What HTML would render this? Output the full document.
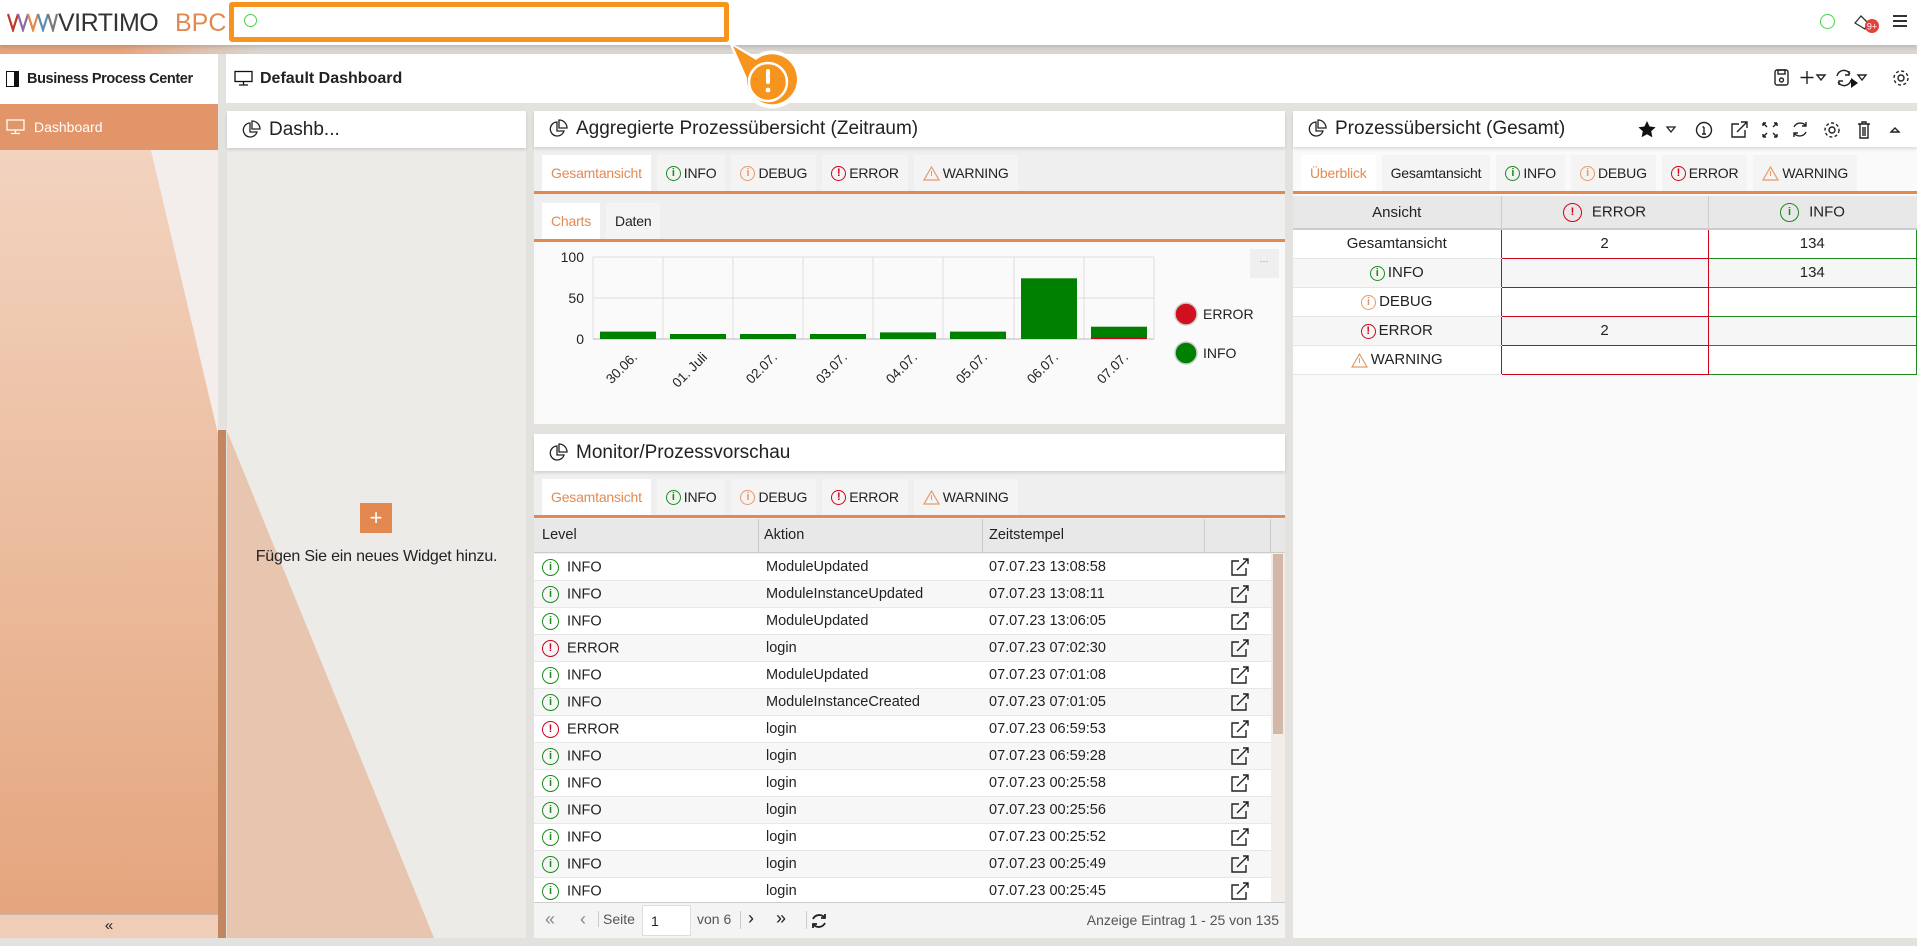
<!DOCTYPE html>
<html><head><meta charset="utf-8">
<style>
*{box-sizing:border-box;margin:0;padding:0}
body{width:1917px;height:946px;overflow:hidden;background:#e4e2df;font-family:"Liberation Sans",sans-serif;color:#222;position:relative}
.abs{position:absolute}
.top{left:0;top:0;width:1917px;height:45px;background:#fff;box-shadow:0 2px 4px rgba(0,0,0,.15);z-index:5}
.strip{left:0;top:45px;width:1917px;height:9px;background:linear-gradient(90deg,#e7a47c 0,#e7a47c 120px,#d9d6d2 260px,#d9d6d2 100%)}
.white{background:#fff}
.hdr{display:flex;align-items:center;font-size:19px;padding-left:14px;box-shadow:0 2px 3px rgba(0,0,0,.12);white-space:nowrap}
.tabs{display:flex;gap:6px;padding-left:8px;border-bottom:3px solid #e3894f;align-items:flex-end}
.tab{background:#f4f4f4;height:36px;display:flex;align-items:center;padding:0 9px;font-size:14px;gap:3px;letter-spacing:-.2px;white-space:nowrap}
.tab.act{background:#fff;color:#e38a55}
.ic{display:inline-flex;width:15px;height:15px;border-radius:50%;border:1.4px solid;align-items:center;justify-content:center;font-size:11px;font-weight:bold;line-height:1;vertical-align:middle}
.g{color:#1d8a1d;border-color:#1d8a1d}
.o{color:#e59a6a;border-color:#e59a6a}
.r{color:#d0021b;border-color:#d0021b}
.row{position:absolute;left:0;width:737px;height:27px;border-bottom:1px solid #e8e8e8;font-size:14.5px}
.row>span{position:absolute;top:5px}
.ct td{border:1.5px solid;height:29px;text-align:center;font-size:15px;vertical-align:middle}
.ct td .ic,.ct td svg{margin-right:3px;vertical-align:middle}
</style></head><body>

<div class="abs strip"></div>
<div class="abs top">
  <svg class="abs" style="left:6px;top:12px" width="52" height="20" viewBox="0 0 52 20">
    <g stroke-width="2.2" fill="none">
      <path d="M2 2 L7 18 L12 2" stroke="#c0392b"/><path d="M12 2 L17 18 L22 2" stroke="#8e6aa0"/>
      <path d="M22 2 L27 18 L32 2" stroke="#e28a4a"/><path d="M32 2 L37 18 L42 2" stroke="#5b8fb0"/><path d="M42 2 L47 18 L51 2" stroke="#7a7a7a"/>
    </g>
  </svg>
  <div class="abs" style="left:58px;top:9px;font-size:25px;color:#333;letter-spacing:-.5px">VIRTIMO</div>
  <div class="abs" style="left:175px;top:9px;font-size:25px;color:#e3894f">BPC</div>
  <div class="abs" style="left:229px;top:2px;width:500px;height:40px;border:5px solid #f7941d;border-radius:3px;background:#fff"></div>
  <div class="abs" style="left:244px;top:14px;width:13px;height:13px;border:1.5px solid #4cd04c;border-radius:50%"></div>
  <div class="abs" style="left:1820px;top:14px;width:15px;height:15px;border:1.5px solid #4cd04c;border-radius:50%"></div>
  <svg class="abs" style="left:1852px;top:13px" width="30" height="22" viewBox="0 0 30 22"><path d="M3 10 L9 3 L15 9 L13 16 Z" fill="none" stroke="#333" stroke-width="1.3"/><circle cx="20" cy="13" r="7" fill="#e8403a"/><text x="20" y="16.5" font-size="9" fill="#fff" text-anchor="middle" font-family="Liberation Sans">9+</text></svg>
  <div class="abs" style="left:1893px;top:15px;width:14px;height:2px;background:#333;box-shadow:0 5px 0 #333,0 10px 0 #333"></div>
</div>

<svg class="abs" style="left:725px;top:38px;z-index:6" width="80" height="72" viewBox="0 0 80 72">
  <path d="M4 4 L30 18 A29 29 0 1 1 18 40 Z" fill="#fff"/>
  <path d="M8 8 L31 22 A25 25 0 1 1 22 40 Z" fill="#f7941d"/>
  <circle cx="43" cy="44" r="19" fill="none" stroke="#fff" stroke-width="2.5"/>
  <rect x="41" y="31" width="4" height="15" rx="2" fill="#fff"/><circle cx="43" cy="52" r="2.4" fill="#fff"/>
</svg>

<div class="abs" style="left:0;top:104px;width:218px;height:834px;background:#f3eeeb;overflow:hidden">
  <div class="abs" style="left:0;top:0;width:218px;height:834px;background:linear-gradient(#f3d6c3,#e4a47c);clip-path:polygon(0 0,140px 0,218px 330px,218px 834px,0 834px)"></div>
  <div class="abs" style="left:0;top:810px;width:218px;height:24px;background:rgba(255,255,255,.45);border-top:1px solid #c9b3a5;text-align:center;font-size:15px;line-height:22px">«</div>
</div>
<div class="abs white" style="left:0;top:54px;width:218px;height:50px;display:flex;align-items:center;padding-left:6px;font-weight:bold;font-size:14.5px;letter-spacing:-.4px;white-space:nowrap">
  <span style="display:inline-block;width:13px;height:16px;border:1.5px solid #111;border-right:5px solid #111;margin-right:8px"></span>Business Process Center</div>
<div class="abs" style="left:0;top:104px;width:218px;height:46px;background:#e3956a;color:#fff;font-size:14px;display:flex;align-items:center;padding-left:6px">
  <svg width="20" height="16" viewBox="0 0 20 16" style="margin-right:8px"><rect x="1" y="1" width="17" height="10" fill="none" stroke="#fff" stroke-width="1.3"/><path d="M9.5 11v3M5 14.5h9" stroke="#fff" stroke-width="1.3"/></svg>Dashboard</div>
<div class="abs" style="left:218px;top:430px;width:8px;height:508px;background:#c08760"></div>

<div class="abs white" style="left:226px;top:54px;width:1691px;height:49px;display:flex;align-items:center;padding-left:8px;font-weight:bold;font-size:16px">
  <svg width="20" height="17" viewBox="0 0 20 16" style="margin-right:6px"><rect x="1" y="1" width="17" height="10" fill="none" stroke="#111" stroke-width="1.3"/><path d="M9.5 11v3M5 14.5h9" stroke="#111" stroke-width="1.3"/></svg>Default Dashboard</div>
<svg class="abs" style="left:1770px;top:66px" width="140" height="24" viewBox="0 0 140 24">
  <g fill="none" stroke="#222" stroke-width="1.4">
    <rect x="5" y="4" width="13" height="15" rx="2"/><rect x="8" y="4" width="7" height="4"/><circle cx="11.5" cy="14" r="2"/>
    <path d="M37 5v13M30.5 11.5h13"/><path d="M47 9h8l-4 5z"/>
    <path d="M80 8a7 7 0 0 0-13 2M68 16a7 7 0 0 0 13-2"/><path d="M79 5v4h-4M69 19v-4h4"/><path d="M88 9h8l-4 5z"/>
  </g>
  <path d="M81 12v10l7-5z" fill="#111"/>
  <g transform="translate(131,12)" fill="none" stroke="#222" stroke-width="1.4"><circle r="3"/><circle r="7" stroke-dasharray="3 2.5"/></g>
</svg>

<div class="abs" style="left:227px;top:111px;width:299px;height:827px;background:#edebe8;overflow:hidden">
  <div class="abs" style="left:0;top:0;width:299px;height:827px;background:rgba(225,150,105,.45);clip-path:polygon(0 320px,0 827px,207px 827px)"></div>
  <div class="abs" style="left:133px;top:392px;width:32px;height:30px;background:#e3894f;color:#fff;text-align:center;font-size:22px;line-height:29px">+</div>
  <div class="abs" style="left:0;top:437px;width:299px;text-align:center;font-size:16px;letter-spacing:-.2px">Fügen Sie ein neues Widget hinzu.</div>
</div>
<div class="abs white hdr" style="left:227px;top:111px;width:299px;height:37px;font-size:19px">
  <svg width="20" height="20" viewBox="0 0 20 20" style="margin-right:8px"><g fill="none" stroke="#222" stroke-width="1.3"><path d="M9 3a7 7 0 1 0 7 9H9z"/><path d="M11 1v8h8a8 8 0 0 0-8-8z"/></g></svg>Dashb...</div>

<div class="abs" style="left:534px;top:111px;width:751px;height:313px;background:#efefef"></div>
<div class="abs white hdr" style="left:534px;top:111px;width:751px;height:36px">
  <svg width="20" height="20" viewBox="0 0 20 20" style="margin-right:8px"><g fill="none" stroke="#222" stroke-width="1.3"><path d="M9 3a7 7 0 1 0 7 9H9z"/><path d="M11 1v8h8a8 8 0 0 0-8-8z"/></g></svg>Aggregierte Prozessübersicht (Zeitraum)</div>
<div class="abs tabs" style="left:534px;top:154px;width:751px;height:40px">
  <div class="tab act">Gesamtansicht</div>
  <div class="tab"><span class="ic g">i</span>INFO</div>
  <div class="tab"><span class="ic o">i</span>DEBUG</div>
  <div class="tab"><span class="ic r">!</span>ERROR</div>
  <div class="tab"><svg width="17" height="15" viewBox="0 0 17 15"><path d="M8.5 1L16 14H1z" fill="none" stroke="#e59a6a" stroke-width="1.2"/><path d="M8.5 5v5" stroke="#e59a6a"/></svg>WARNING</div>
</div>
<div class="abs tabs" style="left:534px;top:202px;width:751px;height:40px">
  <div class="tab act">Charts</div>
  <div class="tab">Daten</div>
</div>
<svg class="abs" style="left:534px;top:242px" width="751" height="182" viewBox="0 0 751 182">
  <rect width="751" height="182" fill="#fafafa"/>
  <rect x="716" y="7" width="29" height="29" fill="#efefef"/><text x="730" y="22" font-size="9" fill="#888" text-anchor="middle">···</text>
  <g stroke="#ddd" stroke-width="1">
    <path d="M59 15h561M59 56h561"/>
    <path d="M59 15v82M129 15v82M199 15v82M269 15v82M339 15v82M409 15v82M480 15v82M550 15v82M620 15v82"/>
  </g>
  <path d="M59 97h561" stroke="#bbb"/>
  <g font-family="Liberation Sans" font-size="14" fill="#222" text-anchor="end">
    <text x="50" y="20">100</text><text x="50" y="61">50</text><text x="50" y="102">0</text>
  </g>
  <g fill="#008000">
    <rect x="66" y="89.6" width="56" height="7.4"/><rect x="136" y="92" width="56" height="5"/>
    <rect x="206" y="92" width="56" height="5"/><rect x="276" y="92" width="56" height="5"/>
    <rect x="346" y="90.4" width="56" height="6.6"/><rect x="416" y="89.6" width="56" height="7.4"/>
    <rect x="487" y="36.3" width="56" height="60.7"/><rect x="557" y="84.7" width="56" height="12.3"/>
  </g>
  <rect x="557" y="95.5" width="56" height="1.5" fill="#d0021b"/>
  <g font-family="Liberation Sans" font-size="13.5" fill="#222" text-anchor="end">
    <text transform="translate(104,116) rotate(-45)">30.06.</text>
    <text transform="translate(174,116) rotate(-45)">01. Juli</text>
    <text transform="translate(244,116) rotate(-45)">02.07.</text>
    <text transform="translate(314,116) rotate(-45)">03.07.</text>
    <text transform="translate(384,116) rotate(-45)">04.07.</text>
    <text transform="translate(454,116) rotate(-45)">05.07.</text>
    <text transform="translate(525,116) rotate(-45)">06.07.</text>
    <text transform="translate(595,116) rotate(-45)">07.07.</text>
  </g>
  <circle cx="652" cy="72" r="11" fill="#d0101e" stroke="#ccc" stroke-width="1.5"/>
  <circle cx="652" cy="111" r="11" fill="#008000" stroke="#ccc" stroke-width="1.5"/>
  <g font-family="Liberation Sans" font-size="14" fill="#222"><text x="669" y="77">ERROR</text><text x="669" y="116">INFO</text></g>
</svg>

<div class="abs" style="left:534px;top:434px;width:751px;height:504px;background:#efefef"></div>
<div class="abs white hdr" style="left:534px;top:434px;width:751px;height:37px">
  <svg width="20" height="20" viewBox="0 0 20 20" style="margin-right:8px"><g fill="none" stroke="#222" stroke-width="1.3"><path d="M9 3a7 7 0 1 0 7 9H9z"/><path d="M11 1v8h8a8 8 0 0 0-8-8z"/></g></svg>Monitor/Prozessvorschau</div>
<div class="abs tabs" style="left:534px;top:478px;width:751px;height:40px">
  <div class="tab act">Gesamtansicht</div>
  <div class="tab"><span class="ic g">i</span>INFO</div>
  <div class="tab"><span class="ic o">i</span>DEBUG</div>
  <div class="tab"><span class="ic r">!</span>ERROR</div>
  <div class="tab"><svg width="17" height="15" viewBox="0 0 17 15"><path d="M8.5 1L16 14H1z" fill="none" stroke="#e59a6a" stroke-width="1.2"/><path d="M8.5 5v5" stroke="#e59a6a"/></svg>WARNING</div>
</div>
<div class="abs" style="left:534px;top:519px;width:751px;height:34px;background:#e8e8e8;border-bottom:1px solid #ccc;font-size:14.5px">
  <span class="abs" style="left:8px;top:8px">Level</span>
  <span class="abs" style="left:224px;top:0;height:34px;border-left:1px solid #ccc"></span>
  <span class="abs" style="left:230px;top:8px">Aktion</span>
  <span class="abs" style="left:448px;top:0;height:34px;border-left:1px solid #ccc"></span>
  <span class="abs" style="left:455px;top:8px">Zeitstempel</span>
  <span class="abs" style="left:670px;top:0;height:34px;border-left:1px solid #ccc"></span>
  <span class="abs" style="left:736px;top:0;height:34px;border-left:1px solid #ccc"></span>
</div>
<div class="abs" style="left:534px;top:554px;width:751px;height:348px;background:#fff;overflow:hidden">
  <div class="abs" style="left:737px;top:0;width:14px;height:348px;background:#f3ede9"></div>
  <div class="abs" style="left:739px;top:0;width:10px;height:180px;background:#d3b8a7"></div>
</div>
<div class="abs" style="left:534px;top:902px;width:751px;height:36px;background:#f4f4f4;border-top:1px solid #ccc;font-size:14px;color:#555">
  <span class="abs" style="left:11px;top:6px;font-size:18px;color:#888">«</span>
  <span class="abs" style="left:46px;top:6px;font-size:18px;color:#888">‹</span>
  <span class="abs" style="left:64px;top:8px;border-left:1px solid #ccc;padding-left:4px">Seite</span>
  <span class="abs" style="left:108px;top:2px;width:49px;height:31px;background:#fff;border:1px solid #ddd;padding:7px 8px;color:#222">1</span>
  <span class="abs" style="left:163px;top:8px">von 6</span>
  <span class="abs" style="left:206px;top:8px;height:18px;border-left:1px solid #ccc"></span>
  <span class="abs" style="left:214px;top:5px;font-size:18px;color:#222">›</span>
  <span class="abs" style="left:242px;top:5px;font-size:18px;color:#222">»</span>
  <span class="abs" style="left:272px;top:8px;height:18px;border-left:1px solid #ccc"></span>
  <svg class="abs" style="left:275px;top:8px" width="20" height="20" viewBox="0 0 20 20"><g fill="none" stroke="#222" stroke-width="1.8"><path d="M16 7a7 7 0 0 0-12 1M4 13a7 7 0 0 0 12-1"/><path d="M16 3v4h-4M4 17v-4h4"/></g></svg>
  <span class="abs" style="right:6px;top:9px">Anzeige Eintrag 1 - 25 von 135</span>
</div>

<div class="abs" style="left:1293px;top:111px;width:624px;height:827px;background:#fafafa"></div>
<div class="abs white hdr" style="left:1293px;top:111px;width:624px;height:36px">
  <svg width="20" height="20" viewBox="0 0 20 20" style="margin-right:8px"><g fill="none" stroke="#222" stroke-width="1.3"><path d="M9 3a7 7 0 1 0 7 9H9z"/><path d="M11 1v8h8a8 8 0 0 0-8-8z"/></g></svg>Prozessübersicht (Gesamt)</div>
<svg class="abs" style="left:1636px;top:118px" width="275" height="24" viewBox="0 0 275 24">
  <path d="M11 3l2.6 5.5 6 .7-4.4 4.1 1.2 6-5.4-3-5.4 3 1.2-6-4.4-4.1 6-.7z" fill="#111"/>
  <path d="M31 9h8l-4 5z" fill="none" stroke="#222" stroke-width="1.3"/>
  <g fill="none" stroke="#222" stroke-width="1.4">
    <circle cx="68" cy="12" r="7.5"/><path d="M68 9v7M66 16h4M66.5 9h1.5"/>
    <path d="M103 6h-7v13h13v-7M101 14l10-10M105 4h6v6"/>
    <path d="M127 5l4 4M127 5h3M127 5v3M141 5l-4 4M141 5h-3M141 5v3M127 19l4-4M127 19h3M127 19v-3M141 19l-4-4M141 19h-3M141 19v-3"/>
    <path d="M170 8a7 7 0 0 0-12 1M158 15a7 7 0 0 0 12-1M170 4v4h-4M158 19v-4h4"/>
    <circle cx="196" cy="12" r="3"/><circle cx="196" cy="12" r="7" stroke-dasharray="3 2.3"/>
    <path d="M222 6h12M226 6V4h4v2M224 6v14h8V6M227 9v9M229 9v9"/>
    <path d="M255 14l4-4 4 4z"/>
  </g>
</svg>
<div class="abs tabs" style="left:1293px;top:154px;width:624px;height:40px">
  <div class="tab act">Überblick</div>
  <div class="tab">Gesamtansicht</div>
  <div class="tab"><span class="ic g">i</span>INFO</div>
  <div class="tab"><span class="ic o">i</span>DEBUG</div>
  <div class="tab"><span class="ic r">!</span>ERROR</div>
  <div class="tab"><svg width="17" height="15" viewBox="0 0 17 15"><path d="M8.5 1L16 14H1z" fill="none" stroke="#e59a6a" stroke-width="1.2"/><path d="M8.5 5v5" stroke="#e59a6a"/></svg>WARNING</div>
</div>
<table class="abs ct" style="left:1293px;top:196px;width:624px;border-collapse:collapse;font-size:15px">
  <tr style="background:#e8e8e8;height:33px"><th style="width:208px;font-weight:normal;border-right:1px solid #ccc;border-bottom:2px solid #ccc;vertical-align:middle">Ansicht</th><th style="width:207px;font-weight:normal;border-right:1px solid #ccc;border-bottom:2px solid #ccc;vertical-align:middle"><span class="ic r" style="width:19px;height:19px;margin-right:10px">!</span>ERROR</th><th style="font-weight:normal;border-bottom:2px solid #ccc;vertical-align:middle"><span class="ic g" style="width:19px;height:19px;margin-right:10px">i</span>INFO</th></tr>
  <tr style="background:#fff"><td style="border:none;border-bottom:1px solid #e5e5e5">Gesamtansicht</td><td style="border-color:#d0021b">2</td><td style="border-color:#1d8a1d">134</td></tr>
  <tr style="background:#f6f6f6"><td style="border:none;border-bottom:1px solid #e5e5e5"><span class="ic g">i</span>INFO</td><td style="border-color:#d0021b"></td><td style="border-color:#1d8a1d">134</td></tr>
  <tr style="background:#fff"><td style="border:none;border-bottom:1px solid #e5e5e5"><span class="ic o">i</span>DEBUG</td><td style="border-color:#d0021b"></td><td style="border-color:#1d8a1d"></td></tr>
  <tr style="background:#f6f6f6"><td style="border:none;border-bottom:1px solid #e5e5e5"><span class="ic r">!</span>ERROR</td><td style="border-color:#d0021b">2</td><td style="border-color:#1d8a1d"></td></tr>
  <tr style="background:#fff"><td style="border:none;border-bottom:1px solid #e5e5e5"><svg width="17" height="15" viewBox="0 0 17 15"><path d="M8.5 1L16 14H1z" fill="none" stroke="#e59a6a" stroke-width="1.2"/><path d="M8.5 5v5" stroke="#e59a6a"/></svg>WARNING</td><td style="border-color:#d0021b"></td><td style="border-color:#1d8a1d"></td></tr>
</table>

<div class="abs" style="left:534px;top:554px;width:737px;height:348px;overflow:hidden">
<div class="row" style="top:0;background:#fff"><span style="left:8px"><span class="ic g" style="width:17px;height:17px">i</span>&nbsp; INFO</span><span style="left:232px">ModuleUpdated</span><span style="left:455px">07.07.23 13:08:58</span><span style="left:695px;top:2px"><svg width="22" height="22" viewBox="0 0 22 22"><path d="M10 5H3v14h14v-7M8 14L19 3M14 3h5v5" fill="none" stroke="#222" stroke-width="1.4"/></svg></span></div>
<div class="row" style="top:27px;background:#f7f7f7"><span style="left:8px"><span class="ic g" style="width:17px;height:17px">i</span>&nbsp; INFO</span><span style="left:232px">ModuleInstanceUpdated</span><span style="left:455px">07.07.23 13:08:11</span><span style="left:695px;top:2px"><svg width="22" height="22" viewBox="0 0 22 22"><path d="M10 5H3v14h14v-7M8 14L19 3M14 3h5v5" fill="none" stroke="#222" stroke-width="1.4"/></svg></span></div>
<div class="row" style="top:54px;background:#fff"><span style="left:8px"><span class="ic g" style="width:17px;height:17px">i</span>&nbsp; INFO</span><span style="left:232px">ModuleUpdated</span><span style="left:455px">07.07.23 13:06:05</span><span style="left:695px;top:2px"><svg width="22" height="22" viewBox="0 0 22 22"><path d="M10 5H3v14h14v-7M8 14L19 3M14 3h5v5" fill="none" stroke="#222" stroke-width="1.4"/></svg></span></div>
<div class="row" style="top:81px;background:#f7f7f7"><span style="left:8px"><span class="ic r" style="width:17px;height:17px">!</span>&nbsp; ERROR</span><span style="left:232px">login</span><span style="left:455px">07.07.23 07:02:30</span><span style="left:695px;top:2px"><svg width="22" height="22" viewBox="0 0 22 22"><path d="M10 5H3v14h14v-7M8 14L19 3M14 3h5v5" fill="none" stroke="#222" stroke-width="1.4"/></svg></span></div>
<div class="row" style="top:108px;background:#fff"><span style="left:8px"><span class="ic g" style="width:17px;height:17px">i</span>&nbsp; INFO</span><span style="left:232px">ModuleUpdated</span><span style="left:455px">07.07.23 07:01:08</span><span style="left:695px;top:2px"><svg width="22" height="22" viewBox="0 0 22 22"><path d="M10 5H3v14h14v-7M8 14L19 3M14 3h5v5" fill="none" stroke="#222" stroke-width="1.4"/></svg></span></div>
<div class="row" style="top:135px;background:#f7f7f7"><span style="left:8px"><span class="ic g" style="width:17px;height:17px">i</span>&nbsp; INFO</span><span style="left:232px">ModuleInstanceCreated</span><span style="left:455px">07.07.23 07:01:05</span><span style="left:695px;top:2px"><svg width="22" height="22" viewBox="0 0 22 22"><path d="M10 5H3v14h14v-7M8 14L19 3M14 3h5v5" fill="none" stroke="#222" stroke-width="1.4"/></svg></span></div>
<div class="row" style="top:162px;background:#fff"><span style="left:8px"><span class="ic r" style="width:17px;height:17px">!</span>&nbsp; ERROR</span><span style="left:232px">login</span><span style="left:455px">07.07.23 06:59:53</span><span style="left:695px;top:2px"><svg width="22" height="22" viewBox="0 0 22 22"><path d="M10 5H3v14h14v-7M8 14L19 3M14 3h5v5" fill="none" stroke="#222" stroke-width="1.4"/></svg></span></div>
<div class="row" style="top:189px;background:#f7f7f7"><span style="left:8px"><span class="ic g" style="width:17px;height:17px">i</span>&nbsp; INFO</span><span style="left:232px">login</span><span style="left:455px">07.07.23 06:59:28</span><span style="left:695px;top:2px"><svg width="22" height="22" viewBox="0 0 22 22"><path d="M10 5H3v14h14v-7M8 14L19 3M14 3h5v5" fill="none" stroke="#222" stroke-width="1.4"/></svg></span></div>
<div class="row" style="top:216px;background:#fff"><span style="left:8px"><span class="ic g" style="width:17px;height:17px">i</span>&nbsp; INFO</span><span style="left:232px">login</span><span style="left:455px">07.07.23 00:25:58</span><span style="left:695px;top:2px"><svg width="22" height="22" viewBox="0 0 22 22"><path d="M10 5H3v14h14v-7M8 14L19 3M14 3h5v5" fill="none" stroke="#222" stroke-width="1.4"/></svg></span></div>
<div class="row" style="top:243px;background:#f7f7f7"><span style="left:8px"><span class="ic g" style="width:17px;height:17px">i</span>&nbsp; INFO</span><span style="left:232px">login</span><span style="left:455px">07.07.23 00:25:56</span><span style="left:695px;top:2px"><svg width="22" height="22" viewBox="0 0 22 22"><path d="M10 5H3v14h14v-7M8 14L19 3M14 3h5v5" fill="none" stroke="#222" stroke-width="1.4"/></svg></span></div>
<div class="row" style="top:270px;background:#fff"><span style="left:8px"><span class="ic g" style="width:17px;height:17px">i</span>&nbsp; INFO</span><span style="left:232px">login</span><span style="left:455px">07.07.23 00:25:52</span><span style="left:695px;top:2px"><svg width="22" height="22" viewBox="0 0 22 22"><path d="M10 5H3v14h14v-7M8 14L19 3M14 3h5v5" fill="none" stroke="#222" stroke-width="1.4"/></svg></span></div>
<div class="row" style="top:297px;background:#f7f7f7"><span style="left:8px"><span class="ic g" style="width:17px;height:17px">i</span>&nbsp; INFO</span><span style="left:232px">login</span><span style="left:455px">07.07.23 00:25:49</span><span style="left:695px;top:2px"><svg width="22" height="22" viewBox="0 0 22 22"><path d="M10 5H3v14h14v-7M8 14L19 3M14 3h5v5" fill="none" stroke="#222" stroke-width="1.4"/></svg></span></div>
<div class="row" style="top:324px;background:#fff"><span style="left:8px"><span class="ic g" style="width:17px;height:17px">i</span>&nbsp; INFO</span><span style="left:232px">login</span><span style="left:455px">07.07.23 00:25:45</span><span style="left:695px;top:2px"><svg width="22" height="22" viewBox="0 0 22 22"><path d="M10 5H3v14h14v-7M8 14L19 3M14 3h5v5" fill="none" stroke="#222" stroke-width="1.4"/></svg></span></div>
</div>
</body></html>
